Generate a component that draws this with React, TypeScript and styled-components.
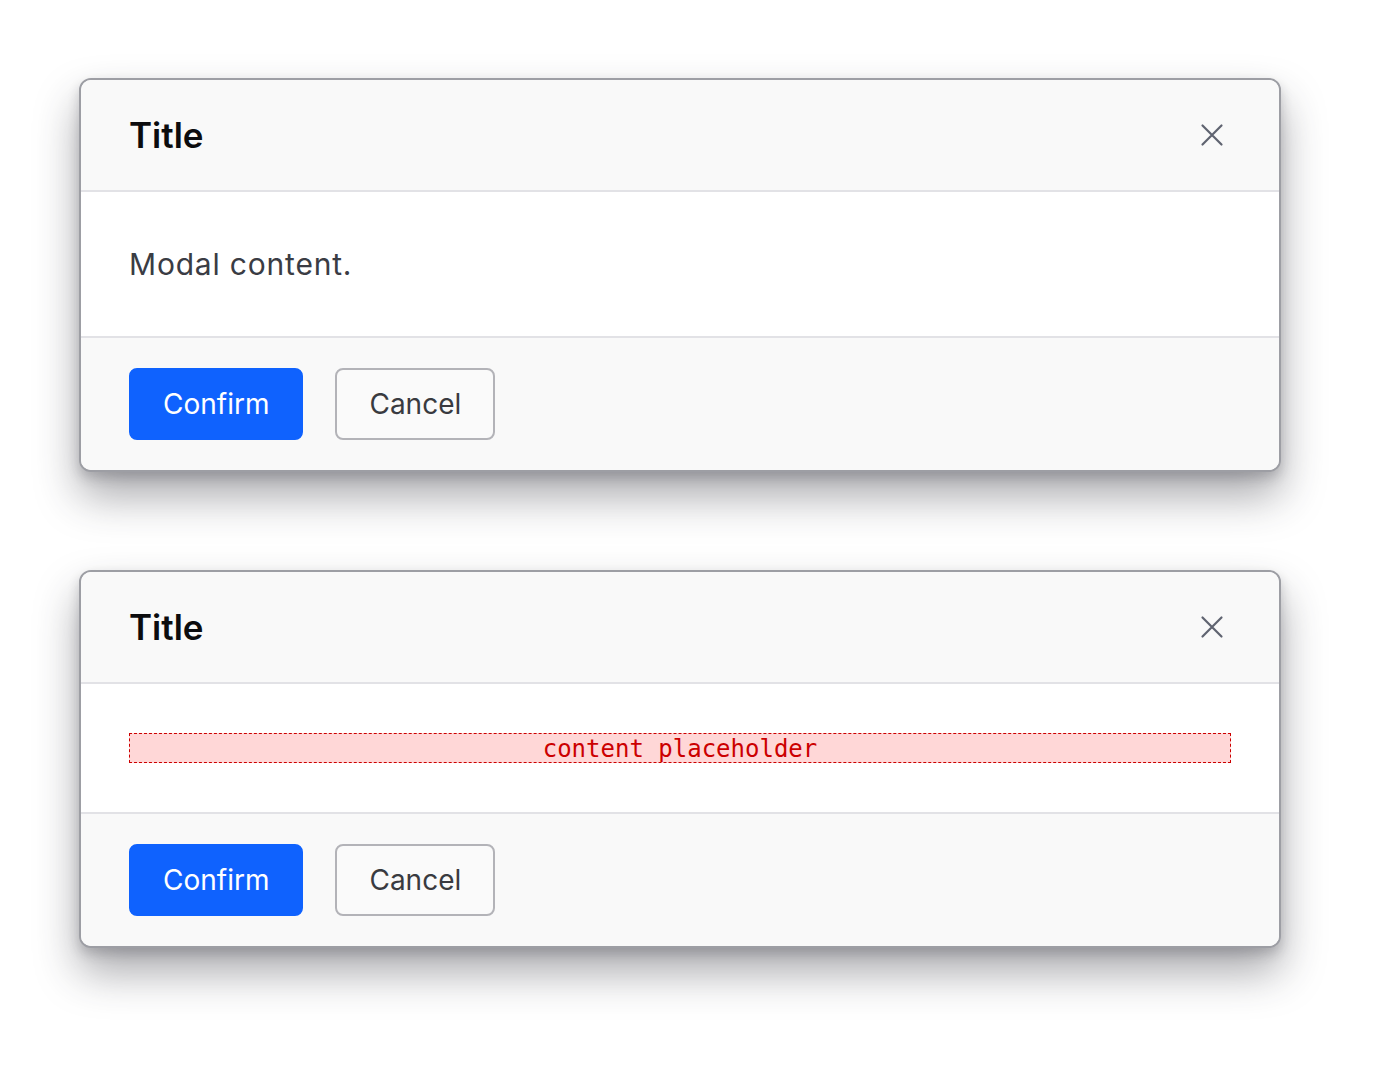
import React from "react";
import styled, { createGlobalStyle } from "styled-components";

const Global = createGlobalStyle`
  html, body { margin: 0; padding: 0; background: #ffffff; }
  body { font-family: Inter, "Noto Sans", "Liberation Sans", sans-serif; }
`;

const Page = styled.div`
  display: flex;
  flex-direction: column;
  gap: 98px;
  min-height: 1074px;
  box-sizing: border-box;
  padding: 78px 0 120px 79px;
`;

const Modal = styled.div`
  width: 1202px;
  box-sizing: border-box;
  border: 2px solid #9d9ea4;
  border-radius: 12px;
  overflow: hidden;
  background: #ffffff;
  box-shadow: 0 24px 44px rgba(40, 40, 50, 0.4), 0 6px 12px rgba(40, 40, 50, 0.2);
  display: flex;
  flex-direction: column;
`;

const Header = styled.div`
  display: flex;
  align-items: center;
  justify-content: space-between;
  height: 110px;
  padding: 0 55px 0 48px;
  background: #f9f9f9;
  border-bottom: 2px solid #e2e2e6;
`;

const Title = styled.h2`
  margin: 0;
  font-size: 35px;
  font-weight: 600;
  color: #0c0c0e;
  letter-spacing: 0;
`;

const CloseButton = styled.button`
  width: 24px;
  height: 24px;
  padding: 0;
  border: none;
  background: transparent;
  display: flex;
  align-items: center;
  justify-content: center;
  color: #5f6370;
`;

const Body = styled.div`
  padding: 49px 48px 49px;
  background: #ffffff;
  border-bottom: 2px solid #e2e2e6;
`;

const BodyText = styled.p`
  margin: 0;
  font-size: 30px;
  line-height: 46px;
  letter-spacing: 0.8px;
  color: #3a3c44;
`;

const Placeholder = styled.div`
  height: 30px;
  box-sizing: border-box;
  border: 1px dashed #cc0000;
  background: #ffd7d7;
  color: #cc0000;
  font-family: "DejaVu Sans Mono", monospace;
  font-size: 24px;
  line-height: 30px;
  text-align: center;
`;

const Footer = styled.div`
  display: flex;
  gap: 32px;
  padding: 30px 48px;
  background: #f9f9f9;
`;

const Button = styled.button<{ $primary?: boolean }>`
  height: 72px;
  box-sizing: border-box;
  padding: 0 32px;
  border-radius: 8px;
  font-family: Inter, "Noto Sans", "Liberation Sans", sans-serif;
  font-size: 28px;
  font-weight: 400;
  border: 2px solid ${(p) => (p.$primary ? "#0f62fe" : "#b3b3b8")};
  background: ${(p) => (p.$primary ? "#0f62fe" : "#fafafa")};
  color: ${(p) => (p.$primary ? "#ffffff" : "#393a40")};
  min-width: ${(p) => (p.$primary ? "174px" : "158px")};
`;

const CloseIcon = () => (
  <svg width="24" height="24" viewBox="0 0 24 24" fill="none">
    <path d="M2.5 2.5 L21.5 21.5 M21.5 2.5 L2.5 21.5" stroke="currentColor" strokeWidth="2.2" strokeLinecap="round" />
  </svg>
);

const Dialog = ({ children }: { children: React.ReactNode }) => (
  <Modal>
    <Header>
      <Title>Title</Title>
      <CloseButton aria-label="Close">
        <CloseIcon />
      </CloseButton>
    </Header>
    <Body>{children}</Body>
    <Footer>
      <Button $primary>Confirm</Button>
      <Button>Cancel</Button>
    </Footer>
  </Modal>
);

export default function App() {
  return (
    <>
      <Global />
      <Page>
        <Dialog>
          <BodyText>Modal content.</BodyText>
        </Dialog>
        <Dialog>
          <Placeholder>content placeholder</Placeholder>
        </Dialog>
      </Page>
    </>
  );
}
